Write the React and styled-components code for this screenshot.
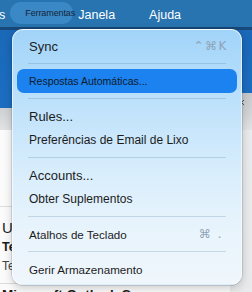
import React from 'react';
import styled, { createGlobalStyle } from 'styled-components';
import { X } from 'lucide-react';

const GlobalStyle = createGlobalStyle`
  html, body {
    margin: 0;
    padding: 0;
    overflow: hidden;
  }
  body {
    font-family: 'Liberation Sans', Arial, sans-serif;
  }
`;

const menuItems = [
  { label: 'Sync', size: 13, shortcut: '⌃⌘K' },
  'sep',
  { label: 'Respostas Automáticas...', size: 10.5, active: true },
  'sep',
  { label: 'Rules...', size: 13 },
  { label: 'Preferências de Email de Lixo', size: 12 },
  'sep',
  { label: 'Accounts...', size: 13 },
  { label: 'Obter Suplementos', size: 12 },
  'sep',
  { label: 'Atalhos de Teclado', size: 11.6, shortcut: '⌘ .', inset: true },
  'sep',
  { label: 'Gerir Armazenamento', size: 11.6 },
];

const App = () => {
  return (
    <>
      <GlobalStyle />
      <Screen>
        <TopBar>
          <TopItem $first>s</TopItem>
          <TopPill>Ferramentas</TopPill>
          <TopItem $gap={5}>Janela</TopItem>
          <TopItem $gap={34}>Ajuda</TopItem>
        </TopBar>

        <Ribbon />

        <Toolbar>
          <NewTab />
          <CloseIcon>
            <X size={9} strokeWidth={2.2} />
          </CloseIcon>
        </Toolbar>

        <Content>
          <MailList>
            <GroupHeader />
            <MailItem>
              <Sender>Uma atualização da conta</Sender>
              <Subject>Temos novidades para si</Subject>
              <Preview>Temos o prazer de informar que...</Preview>
            </MailItem>
            <MailItem $top={2}>
              <Sender $bold>
                Microsoft Outlook Co
                <UnreadDot />
              </Sender>
            </MailItem>
          </MailList>
          <ReadingPane />
        </Content>

        <Menu>
          {menuItems.map((item, i) =>
            item === 'sep' ? (
              <Separator key={i} />
            ) : (
              <MenuItem key={i} $active={item.active}>
                <ItemLabel $size={item.size}>{item.label}</ItemLabel>
                {item.shortcut && (
                  <Shortcut $inset={item.inset}>{item.shortcut}</Shortcut>
                )}
              </MenuItem>
            )
          )}
        </Menu>
      </Screen>
    </>
  );
};

export default App;

const Screen = styled.div`
  position: relative;
  width: 252px;
  height: 292px;
  overflow: hidden;
  display: flex;
  flex-direction: column;
  background: #f7f7f7;
`;

const TopBar = styled.div`
  height: 27px;
  flex-shrink: 0;
  display: flex;
  align-items: center;
  background: #2874b0;
`;

const TopItem = styled.span`
  margin-left: ${(p) => (p.$first ? -1 : p.$gap)}px;
  color: #ffffff;
  font-size: 12.5px;
  line-height: 16px;
  padding-top: 2px;
  white-space: nowrap;
`;

const TopPill = styled.span`
  margin-left: 5px;
  width: 63px;
  height: 22px;
  box-sizing: border-box;
  padding-left: 15px;
  border-radius: 11px;
  background: #3b88c6;
  color: #13263a;
  font-size: 9px;
  letter-spacing: -0.1px;
  line-height: 22px;
  white-space: nowrap;
  overflow: visible;
  margin-top: -1px;
`;

const Ribbon = styled.div`
  height: 63px;
  flex-shrink: 0;
  border-top: 3px solid #17497b;
  background: linear-gradient(180deg, #1a68b8 0%, #1c6dc1 100%);
`;

const Toolbar = styled.div`
  height: 37px;
  flex-shrink: 0;
  display: flex;
  align-items: flex-start;
  justify-content: space-between;
  background: linear-gradient(180deg, #c6c9cc 0%, #d3d5d7 60%, #e2e3e4 100%);
`;

const NewTab = styled.div`
  width: 14px;
  height: 15px;
  background: #1c6dc1;
`;

const CloseIcon = styled.span`
  display: flex;
  margin: 5px 6px 0 0;
  color: #3a3a3a;
`;

const Content = styled.div`
  flex: 1;
  display: flex;
  min-height: 0;
`;

const MailList = styled.div`
  width: 230px;
  background: #fbfbfb;
`;

const GroupHeader = styled.div`
  height: 76px;
  border-bottom: 1px solid #dedede;
  margin-bottom: 12px;
`;

const MailItem = styled.div`
  padding: ${(p) => p.$top || 0}px 0 8px 2px;
  border-bottom: 1px solid #dcdcdc;
  white-space: nowrap;
  overflow: hidden;
`;

const Sender = styled.div`
  display: flex;
  align-items: center;
  gap: 34px;
  font-size: ${(p) => (p.$bold ? 13.5 : 15)}px;
  font-weight: ${(p) => (p.$bold ? 700 : 400)};
  line-height: 18px;
  color: #1b1b1b;
`;

const UnreadDot = styled.span`
  width: 7px;
  height: 7px;
  border-radius: 50%;
  background: #1a73d8;
`;

const Subject = styled.div`
  font-size: 12.5px;
  font-weight: 700;
  line-height: 20px;
  color: #1b1b1b;
`;

const Preview = styled.div`
  font-size: 12px;
  line-height: 18px;
  color: #444444;
`;

const ReadingPane = styled.div`
  flex: 1;
  background: #e8eaec;
`;

const Menu = styled.div`
  position: absolute;
  top: 29px;
  left: 12px;
  width: 230px;
  box-sizing: border-box;
  padding: 4px 0 3px;
  border-radius: 11px;
  border: 1px solid rgba(255, 255, 255, 0.6);
  background: linear-gradient(
    180deg,
    #a1d4f9 0%,
    #bfe2fb 30%,
    #daeefc 58%,
    #e9f4fc 80%,
    #eff6fc 100%
  );
  box-shadow: 0 3px 10px rgba(0, 0, 0, 0.2), 0 0 0 0.5px rgba(0, 40, 80, 0.25);
`;

const MenuItem = styled.div`
  height: 24px;
  margin: 0 4px;
  padding: 0 9px 0 12px;
  display: flex;
  align-items: center;
  justify-content: space-between;
  border-radius: 7px;
  background: ${(p) => (p.$active ? '#1b82ef' : 'transparent')};
  color: ${(p) => (p.$active ? '#0d1b2b' : '#1c1c1c')};
`;

const ItemLabel = styled.span`
  font-size: ${(p) => p.$size}px;
  white-space: nowrap;
`;

const Shortcut = styled.span`
  margin-right: ${(p) => (p.$inset ? 5 : 0)}px;
  font-family: 'DejaVu Sans', 'Liberation Sans', sans-serif;
  font-size: 12px;
  letter-spacing: 1.5px;
  color: #8fa3b6;
  white-space: nowrap;
`;

const Separator = styled.div`
  height: 11px;
  margin: 0 15px;
  display: flex;
  align-items: center;

  &::after {
    content: '';
    flex: 1;
    height: 1px;
    background: rgba(70, 110, 150, 0.22);
  }
`;
